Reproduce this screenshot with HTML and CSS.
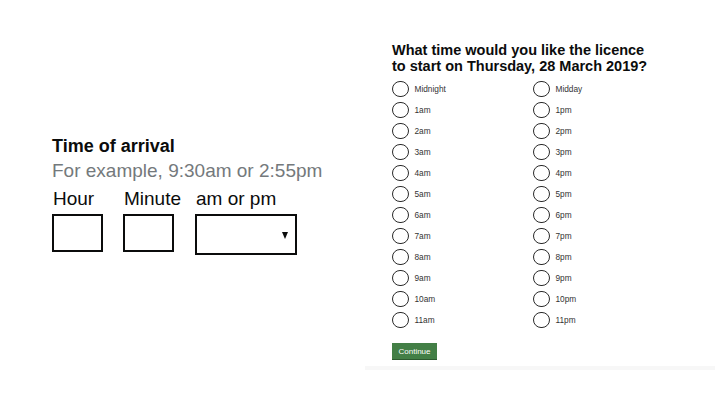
FILE: index.html
```html
<!DOCTYPE html>
<html lang="en">
<head>
<meta charset="utf-8">
<title>Time pickers</title>
<link rel="stylesheet" href="styles.css">
</head>
<body>
<main class="page">
  <section class="left">
    <h1 class="title">Time of arrival</h1>
    <p class="hint">For example, 9:30am or 2:55pm</p>
    <div class="fields">
      <div class="field field-hour">
        <label class="label">Hour</label>
        <div class="box small"></div>
      </div>
      <div class="field field-minute">
        <label class="label">Minute</label>
        <div class="box small"></div>
      </div>
      <div class="field">
        <label class="label">am or pm</label>
        <div class="box select"><span class="arrow"></span></div>
      </div>
    </div>
  </section>
  <section class="right">
    <h2 class="question">What time would you like the licence to start on Thursday, 28 March 2019?</h2>
    <div class="radios">
      <ul class="col">
        <li class="radio"><span class="circle"></span><span class="rlabel">Midnight</span></li>
        <li class="radio"><span class="circle"></span><span class="rlabel">1am</span></li>
        <li class="radio"><span class="circle"></span><span class="rlabel">2am</span></li>
        <li class="radio"><span class="circle"></span><span class="rlabel">3am</span></li>
        <li class="radio"><span class="circle"></span><span class="rlabel">4am</span></li>
        <li class="radio"><span class="circle"></span><span class="rlabel">5am</span></li>
        <li class="radio"><span class="circle"></span><span class="rlabel">6am</span></li>
        <li class="radio"><span class="circle"></span><span class="rlabel">7am</span></li>
        <li class="radio"><span class="circle"></span><span class="rlabel">8am</span></li>
        <li class="radio"><span class="circle"></span><span class="rlabel">9am</span></li>
        <li class="radio"><span class="circle"></span><span class="rlabel">10am</span></li>
        <li class="radio"><span class="circle"></span><span class="rlabel">11am</span></li>
      </ul>
      <ul class="col">
        <li class="radio"><span class="circle"></span><span class="rlabel">Midday</span></li>
        <li class="radio"><span class="circle"></span><span class="rlabel">1pm</span></li>
        <li class="radio"><span class="circle"></span><span class="rlabel">2pm</span></li>
        <li class="radio"><span class="circle"></span><span class="rlabel">3pm</span></li>
        <li class="radio"><span class="circle"></span><span class="rlabel">4pm</span></li>
        <li class="radio"><span class="circle"></span><span class="rlabel">5pm</span></li>
        <li class="radio"><span class="circle"></span><span class="rlabel">6pm</span></li>
        <li class="radio"><span class="circle"></span><span class="rlabel">7pm</span></li>
        <li class="radio"><span class="circle"></span><span class="rlabel">8pm</span></li>
        <li class="radio"><span class="circle"></span><span class="rlabel">9pm</span></li>
        <li class="radio"><span class="circle"></span><span class="rlabel">10pm</span></li>
        <li class="radio"><span class="circle"></span><span class="rlabel">11pm</span></li>
      </ul>
    </div>
    <button class="continue" type="button">Continue</button>
  </section>
</main>
</body>
</html>
```

FILE: styles.css
```css
html, body {
  margin: 0;
  padding: 0;
  background: #ffffff;
}

body {
  width: 720px;
  height: 405px;
  overflow: hidden;
  font-family: "Liberation Sans", Arial, sans-serif;
  color: #0b0c0c;
}

.page {
  display: flex;
  align-items: flex-start;
}

.left {
  width: 365px;
  box-sizing: border-box;
  padding: 135px 0 0 52px;
}

.title {
  margin: 0;
  font-size: 18px;
  line-height: 22px;
  font-weight: 700;
}

.hint {
  margin: 3px 0 0;
  font-size: 19px;
  line-height: 22px;
  color: #74797c;
  white-space: nowrap;
}

.fields {
  display: flex;
  align-items: flex-start;
  margin-top: 6px;
}

.field {
  display: flex;
  flex-direction: column;
}

.field-hour {
  width: 71px;
}

.field-minute {
  width: 72px;
}

.label {
  font-size: 19px;
  line-height: 22px;
  margin-left: 1px;
  white-space: nowrap;
}

.box {
  box-sizing: border-box;
  border: 2px solid #0b0c0c;
  margin-top: 4px;
  background: #fff;
}

.small {
  width: 51px;
  height: 38px;
}

.select {
  width: 102px;
  height: 41px;
  display: flex;
  align-items: center;
  justify-content: flex-end;
  padding-right: 7px;
}

.arrow {
  width: 0;
  height: 0;
  border-left: 3.5px solid transparent;
  border-right: 3.5px solid transparent;
  border-top: 7px solid #0b0c0c;
  margin-top: 1px;
}

.right {
  width: 350px;
  box-sizing: border-box;
  padding: 42px 0 0 27px;
  height: 370px;
  border-bottom: 4px solid #f7f7f7;
}

.question {
  margin: 0;
  font-size: 14.5px;
  line-height: 16px;
  font-weight: 700;
  width: 258px;
}

.radios {
  display: flex;
  margin-top: 4.5px;
}

.col {
  list-style: none;
  margin: 0;
  padding: 0;
  width: 141px;
}

.radio {
  display: flex;
  align-items: center;
  height: 21px;
}

.circle {
  box-sizing: border-box;
  width: 16.5px;
  height: 16.5px;
  border: 1.5px solid #2a2a2a;
  border-radius: 50%;
  flex: none;
}

.rlabel {
  margin-left: 6px;
  font-size: 8.3px;
  color: #333;
}

.continue {
  display: block;
  margin-top: 12.5px;
  width: 45px;
  height: 17px;
  padding: 0;
  border: 0;
  border-bottom: 1px solid #2d5a2f;
  background: #437f46;
  color: #fff;
  font-family: "Liberation Sans", Arial, sans-serif;
  font-size: 8px;
}
```
